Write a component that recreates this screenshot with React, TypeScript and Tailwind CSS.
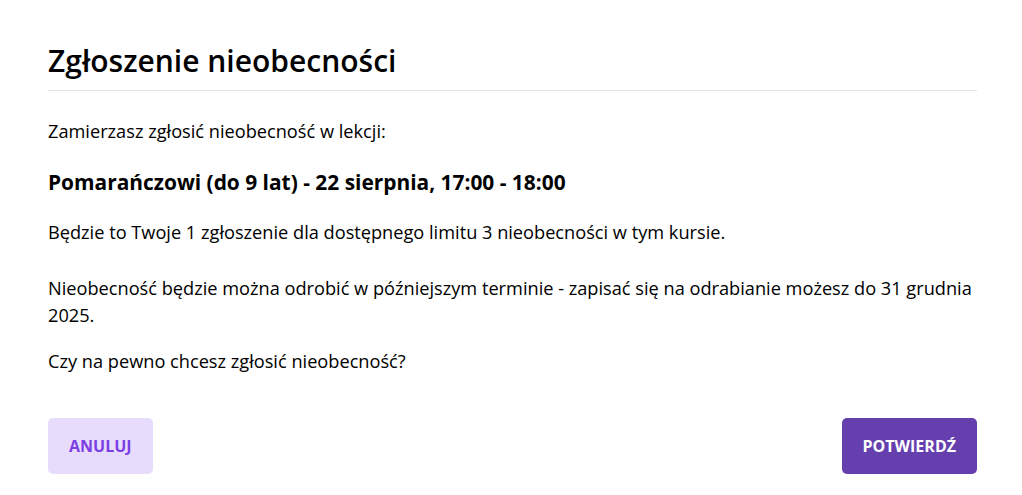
export default function App() {
  return (
    <div className="min-h-screen bg-white pl-12 pr-[45px] pt-[41px] text-black" style={{ fontFamily: '"Open Sans", sans-serif' }}>
      <h1 className="border-b border-[#e3e3e3] pb-[9px] text-[30px] font-semibold leading-[40px]">
        Zgłoszenie nieobecności
      </h1>

      <div className="pt-[27px] text-[18.2px] leading-[27px]">
        <p>Zamierzasz zgłosić nieobecność w lekcji:</p>
        <p className="mt-[24px] text-[20.9px] font-bold">Pomarańczowi (do 9 lat) - 22 sierpnia, 17:00 - 18:00</p>
        <p className="mt-[23px]">Będzie to Twoje 1 zgłoszenie dla dostępnego limitu 3 nieobecności w tym kursie.</p>
        <p className="mt-[29px]">
          Nieobecność będzie można odrobić w późniejszym terminie - zapisać się na odrabianie możesz do 31 grudnia 2025.
        </p>
        <p className="mt-[19px]">Czy na pewno chcesz zgłosić nieobecność?</p>
      </div>

      <div className="mt-[43px] flex items-center justify-between">
        <button className="h-14 rounded-[5px] bg-[#e8dcfd] px-[21px] text-base font-bold uppercase text-[#7b3fe4]">
          Anuluj
        </button>
        <button className="h-14 rounded-[5px] bg-[#653fae] px-[21px] text-base font-bold uppercase text-white">
          Potwierdź
        </button>
      </div>
    </div>
  )
}
